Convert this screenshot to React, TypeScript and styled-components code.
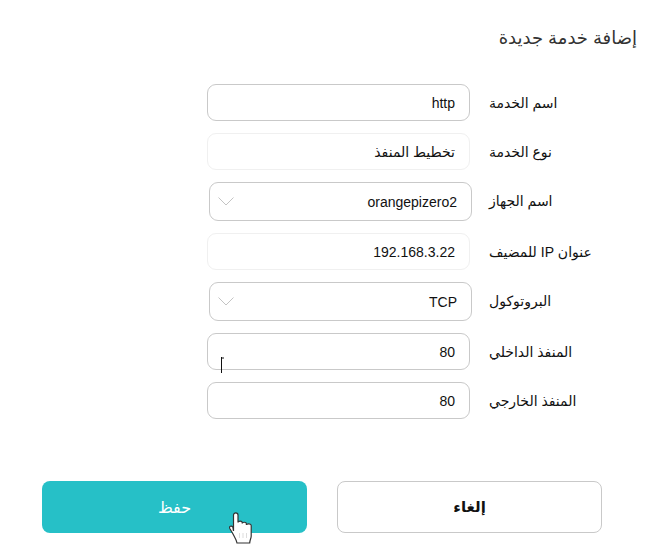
import styled, { createGlobalStyle } from "styled-components";

const GlobalStyle = createGlobalStyle`
  html, body {
    margin: 0;
    padding: 0;
    background: #fff;
  }
`;

const fields = [
  { label: "اسم الخدمة", value: "http", kind: "input" },
  { label: "نوع الخدمة", value: "تخطيط المنفذ", kind: "readonly" },
  { label: "اسم الجهاز", value: "orangepizero2", kind: "select" },
  { label: "عنوان IP للمضيف", value: "192.168.3.22", kind: "readonly" },
  { label: "البروتوكول", value: "TCP", kind: "select" },
  { label: "المنفذ الداخلي", value: "80", kind: "input" },
  { label: "المنفذ الخارجي", value: "80", kind: "input" },
];

export default function App() {
  return (
    <Page dir="rtl">
      <GlobalStyle />
      <Title>إضافة خدمة جديدة</Title>
      <Form>
        {fields.map((f) => (
          <Row key={f.label}>
            <Label>{f.label}</Label>
            {f.kind === "select" ? (
              <SelectBox>
                <span>{f.value}</span>
                <Chevron width="16" height="9" viewBox="0 0 16 9">
                  <path d="M0.5 0.5 L8 8 L15.5 0.5" fill="none" stroke="#c4c4c4" strokeWidth="1" />
                </Chevron>
              </SelectBox>
            ) : (
              <InputBox $muted={f.kind === "readonly"}>{f.value}</InputBox>
            )}
          </Row>
        ))}
        <Caret width="6" height="16" viewBox="0 0 6 16">
          <path d="M1.5 0 V16 M1.5 1 H4" fill="none" stroke="#111" strokeWidth="1" />
        </Caret>
      </Form>
      <Actions>
        <CancelButton>إلغاء</CancelButton>
        <SaveButton>
          حفظ
          <HandCursor width="26" height="33" viewBox="0 0 26 33">
            <path
              d="M4.5 19V3c0-2.8 4.5-2.8 4.5 0v7.5c.3-1.8 4.2-1.8 4.2 0v1c.3-1.8 4.2-1.6 4.2.2v1.3c.3-1.8 4.8-1.5 4.8.5V24c0 2.5-1.3 3.5-1.5 7H8c-.3-3-2.5-6-4-9L.8 16.5c-1-2 1.5-3.5 3-1.5Z"
              fill="#fff"
              stroke="#333"
              strokeWidth="1.2"
            />
            <path d="M10.5 21v5M14 21v5M17.5 21v5" stroke="#ddd" strokeWidth="1" />
          </HandCursor>
        </SaveButton>
      </Actions>
    </Page>
  );
}

const Page = styled.div`
  width: 660px;
  height: 560px;
  box-sizing: border-box;
  padding: 27px 23px 0 0;
  overflow: hidden;
  font-family: "Liberation Sans", "DejaVu Sans", sans-serif;
  color: #111;
`;

const Title = styled.h1`
  margin: 0;
  font-size: 18px;
  font-weight: 400;
  line-height: 22px;
  color: #333;
`;

const Form = styled.div`
  position: relative;
  display: flex;
  flex-direction: column;
  gap: 12px;
  margin-top: 35px;
`;

const Row = styled.div`
  display: flex;
  align-items: flex-start;
`;

const Label = styled.div`
  flex: 0 0 148px;
  height: 37px;
  box-sizing: border-box;
  margin-left: 19px;
  padding-top: 1px;
  font-size: 14px;
  line-height: 37px;
  text-align: left;
  color: #111;
  white-space: nowrap;
`;

const InputBox = styled.div<{ $muted?: boolean }>`
  width: 263px;
  height: 37px;
  box-sizing: border-box;
  padding: 0 14px;
  display: flex;
  align-items: center;
  font-size: 14px;
  border: 1px solid ${(p) => (p.$muted ? "#f0f0f0" : "#c9c9c9")};
  border-radius: 9px;
  background: #fff;
`;

const SelectBox = styled.div`
  width: 263px;
  height: 39px;
  margin-right: -2px;
  box-sizing: border-box;
  padding: 0 14px 0 8px;
  display: flex;
  align-items: center;
  justify-content: space-between;
  font-size: 14px;
  border: 1px solid #c9c9c9;
  border-radius: 9px;
  background: #fff;
`;

const Chevron = styled.svg`
  display: block;
`;

const Caret = styled.svg`
  position: absolute;
  left: 220px;
  top: 273px;
`;

const Actions = styled.div`
  display: flex;
  gap: 30px;
  margin-top: 62px;
  margin-right: 35px;
`;

const ActionButton = styled.div`
  width: 265px;
  height: 52px;
  box-sizing: border-box;
  border-radius: 8px;
  display: flex;
  align-items: center;
  justify-content: center;
  font-size: 15px;
`;

const CancelButton = styled(ActionButton)`
  border: 1px solid #c9c9c9;
  font-weight: 700;
  color: #111;
  background: #fff;
`;

const SaveButton = styled(ActionButton)`
  position: relative;
  background: #26c0c7;
  color: #fff;
  font-size: 16px;
`;

const HandCursor = styled.svg`
  position: absolute;
  left: 187px;
  top: 31px;
`;
